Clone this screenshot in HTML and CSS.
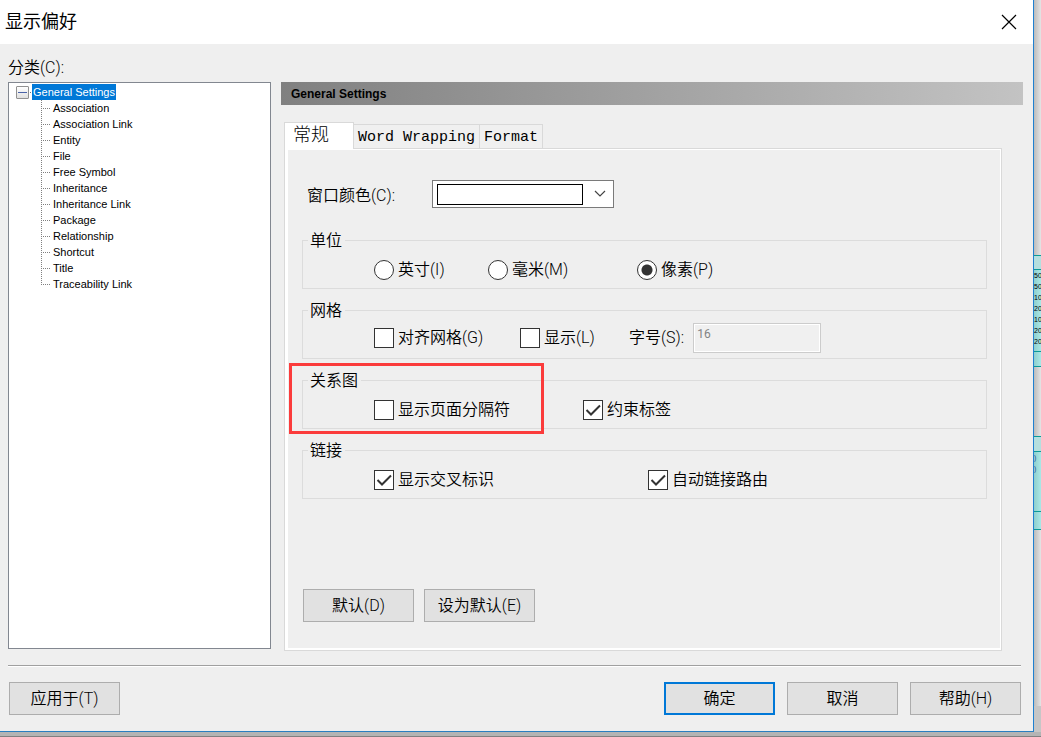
FILE: index.html
```html
<!DOCTYPE html>
<html lang="zh-CN">
<head>
<meta charset="utf-8">
<title>显示偏好</title>
<link rel="stylesheet" href="styles.css">
</head>
<body>
<div class="desktop">
  <main class="dialog">
    <header class="titlebar">
      <h1 class="title">显示偏好</h1>
      <button class="close" type="button" aria-label="关闭">
        <svg width="16" height="16" viewBox="0 0 16 16"><path d="M1 1L15 15M15 1L1 15" stroke="#000" stroke-width="1.2" fill="none"/></svg>
      </button>
    </header>
    <div class="content">
      <nav class="sidebar">
        <h2 class="caption">分类(C):</h2>
        <div class="tree">
          <div class="root">
            <button class="expander" type="button" aria-label="折叠"></button>
            <span class="dot"></span>
            <a class="node selected" href="#">General Settings</a>
          </div>
          <ul class="children">
            <li><a class="node" href="#">Association</a></li>
            <li><a class="node" href="#">Association Link</a></li>
            <li><a class="node" href="#">Entity</a></li>
            <li><a class="node" href="#">File</a></li>
            <li><a class="node" href="#">Free Symbol</a></li>
            <li><a class="node" href="#">Inheritance</a></li>
            <li><a class="node" href="#">Inheritance Link</a></li>
            <li><a class="node" href="#">Package</a></li>
            <li><a class="node" href="#">Relationship</a></li>
            <li><a class="node" href="#">Shortcut</a></li>
            <li><a class="node" href="#">Title</a></li>
            <li><a class="node" href="#">Traceability Link</a></li>
          </ul>
        </div>
      </nav>
      <section class="settings">
        <h2 class="banner">General Settings</h2>
        <div class="tabs">
          <button class="tab active" type="button">常规</button>
          <button class="tab" type="button">Word Wrapping</button>
          <button class="tab" type="button">Format</button>
        </div>
        <form class="panel">
          <div class="color-row">
            <label for="color">窗口颜色(C):</label>
            <div class="picker">
              <select id="color" class="color"><option></option></select>
              <span class="swatch"></span>
              <svg class="chevron" width="12" height="8" viewBox="0 0 12 8"><path d="M1 1L6 6L11 1" stroke="#444" stroke-width="1.2" fill="none"/></svg>
            </div>
          </div>
          <fieldset class="group">
            <legend>单位</legend>
            <div class="row units">
              <label class="option"><input class="radio" type="radio" name="unit">英寸(I)</label>
              <label class="option"><input class="radio" type="radio" name="unit">毫米(M)</label>
              <label class="option"><input class="radio" type="radio" name="unit" checked>像素(P)</label>
            </div>
          </fieldset>
          <fieldset class="group tall">
            <legend>网格</legend>
            <div class="row grid-row">
              <label class="option"><input class="check" type="checkbox">对齐网格(G)</label>
              <label class="option"><input class="check" type="checkbox">显示(L)</label>
              <label class="size">字号(S):<input class="number" type="text" value="16" disabled></label>
            </div>
          </fieldset>
          <fieldset class="group">
            <legend>关系图</legend>
            <div class="row diagram">
              <label class="option"><input class="check" type="checkbox">显示页面分隔符</label>
              <label class="option"><input class="check" type="checkbox" checked>约束标签</label>
            </div>
            <span class="highlight"></span>
          </fieldset>
          <fieldset class="group">
            <legend>链接</legend>
            <div class="row links">
              <label class="option"><input class="check" type="checkbox" checked>显示交叉标识</label>
              <label class="option"><input class="check" type="checkbox" checked>自动链接路由</label>
            </div>
          </fieldset>
          <div class="defaults">
            <button class="btn" type="button">默认(D)</button>
            <button class="btn" type="button">设为默认(E)</button>
          </div>
        </form>
      </section>
    </div>
    <footer class="footer">
      <button class="btn apply" type="button">应用于(T)</button>
      <button class="btn primary" type="button">确定</button>
      <button class="btn" type="button">取消</button>
      <button class="btn" type="button">帮助(H)</button>
    </footer>
  </main>
  <aside class="canvas">
    <div class="entity">
      <div class="entity-head"></div>
      <div class="entity-body">50<br>50<br>10<br>20<br>10<br>20<br>20</div>
      <div class="entity-foot"></div>
    </div>
    <div class="entity second">
      <div class="entity-head"></div>
      <div class="entity-body blue">)<br>)</div>
      <div class="entity-foot"></div>
    </div>
    <div class="scroll-corner"></div>
  </aside>
  <div class="status"></div>
</div>
</body>
</html>
```
FILE: styles.css
```css
* { box-sizing: border-box; }
body {
  margin: 0;
  color: #000;
  font: 350 16px/20px Roboto, "Noto Sans CJK SC", sans-serif;
}
button, input, select { font: inherit; color: inherit; }
h1, h2, ul, fieldset, legend { margin: 0; padding: 0; font-weight: inherit; }
a { color: inherit; text-decoration: none; }

.desktop {
  display: grid;
  grid-template-columns: minmax(0, 1fr) 7px;
  grid-template-rows: 1fr 5px;
  min-height: 100vh;
}
.dialog {
  display: flex;
  flex-direction: column;
  background: #efefef;
  border-right: 1px solid #2080d0;
  border-bottom: 1px solid #2a7ec0;
}

.titlebar {
  display: flex;
  align-items: center;
  justify-content: space-between;
  height: 44px;
  padding: 0 16px 0 5px;
  background: #fff;
}
.title { font-size: 18px; font-weight: 400; }
.close { display: flex; padding: 0; border: 0; background: none; }

.content { display: flex; flex: 1; gap: 10px; padding: 14px 10px 0 8px; }
.sidebar { display: flex; flex-direction: column; width: 263px; padding-bottom: 2px; }
.caption { height: 24px; font-size: 16px; }
.tree {
  flex: 1;
  padding: 1px 0 0 7px;
  background: #fff;
  border: 1px solid #828790;
  font: 11px/16px "Liberation Sans", sans-serif;
}
.root { display: flex; align-items: center; }
.expander {
  width: 13px;
  height: 13px;
  padding: 0;
  border: 1px solid #919191;
  border-radius: 1px;
  background: linear-gradient(#4b63a7, #4b63a7) center / 9px 1px no-repeat, linear-gradient(#fff, #e0e0e0);
}
.dot { width: 1px; height: 1px; margin: 0 1px; background: #777; }
.node { padding: 0 1px; }
.selected { color: #fff; background: #0078d7; }
.children { padding-left: 25px; list-style: none; }
.children li { display: flex; gap: 2px; }
.children li::before {
  content: "";
  width: 9px;
  height: 16px;
  background:
    repeating-linear-gradient(#808080 0 1px, transparent 1px 2px) left top / 1px 100% no-repeat,
    repeating-linear-gradient(90deg, #808080 0 1px, transparent 1px 2px) left 8px / 100% 1px no-repeat;
}
.children li:last-child::before { background-size: 1px 8px, 100% 1px; }

.settings { display: flex; flex: 1; flex-direction: column; min-width: 0; padding-top: 24px; }
.banner {
  height: 23px;
  padding-left: 10px;
  background: linear-gradient(90deg, #808080, #c3c3c3);
  font: bold 12px/24px "Liberation Sans", sans-serif;
}
.tabs { display: flex; align-items: flex-end; height: 43px; padding-left: 3px; }
.tab {
  height: 24px;
  padding: 2px 4px 0;
  border: 1px solid #d9d9d9;
  border-width: 1px 1px 0 0;
  background: #f0f0f0;
  font: 15px/22px "Liberation Mono", "Noto Sans CJK SC", monospace;
}
.active {
  z-index: 1;
  width: 70px;
  height: 27px;
  margin-bottom: -1px;
  padding: 0 8px;
  border-left-width: 1px;
  background: #fff;
  font-size: 18px;
  font-weight: 300;
  text-align: left;
}
.panel {
  display: flex;
  flex: 1;
  flex-direction: column;
  gap: 11px;
  margin: 0 21px 0 3px;
  padding: 31px 14px 28px 17px;
  border: 1px solid #d9d9d9;
  box-shadow: inset 3px 1px #fff, inset -1px -2px #fff;
}
.color-row { display: flex; align-items: center; height: 28px; margin-bottom: 11px; padding-left: 5px; }
.color-row label { width: 125px; padding-top: 3px; }
.picker { position: relative; width: 182px; height: 28px; }
.color {
  width: 100%;
  height: 100%;
  appearance: none;
  border: 1px solid #7a7a7a;
  border-radius: 0;
  background: #fff;
}
.swatch {
  position: absolute;
  inset: 4px 31px 3px 5px;
  border: 1px solid #000;
  pointer-events: none;
}
.chevron { position: absolute; top: 10px; right: 8px; pointer-events: none; }

.group { position: relative; min-width: 0; padding: 0 0 8px 5px; border: 1px solid #dcdcdc; }
.group legend { padding: 0 3px 0 2px; line-height: 21px; }
.row { display: flex; align-items: center; min-height: 20px; padding: 9px 0 0 66px; }
.tall { padding-bottom: 5px; }
.tall .row { padding-top: 2px; }
.option { display: flex; align-items: center; gap: 4px; }
.size { display: flex; align-items: center; gap: 9px; white-space: nowrap; }
.units .option { width: 114px; }
.units .option + .option { width: 149px; }
.grid-row .option { width: 146px; }
.grid-row .option + .option { width: 109px; }
.diagram .option { width: 209px; }
.links .option { width: 274px; }
.radio, .check {
  flex: none;
  width: 20px;
  height: 20px;
  margin: 0;
  appearance: none;
  border: 1px solid #333;
  background: #fff;
}
.radio { border-radius: 50%; }
.radio:checked { background: radial-gradient(circle, #333 0 5px, #fff 6px); }
.check:checked {
  background: #fff url("data:image/svg+xml,%3Csvg xmlns='http://www.w3.org/2000/svg' viewBox='0 0 18 18'%3E%3Cpath d='M2.5 9L7 13.500L16 4.500' fill='none' stroke='%23333' stroke-width='2'/%3E%3C/svg%3E") center / 18px no-repeat;
}
.number {
  width: 128px;
  height: 30px;
  padding: 0 4px 9px 3px;
  border: 1px solid #ccc;
  box-shadow: inset 0 0 0 1px #fff;
  background: #f0f0f0;
  color: #838383;
  font-size: 12px;
  font-weight: 400;
}
.highlight {
  position: absolute;
  top: -28px;
  left: -14px;
  width: 255px;
  height: 71px;
  border: 3px solid #fb3b3b;
  pointer-events: none;
}
.defaults { display: flex; gap: 10px; margin-top: auto; padding-left: 1px; }

.btn {
  width: 111px;
  height: 33px;
  padding: 0;
  border: 1px solid #adadad;
  background: #e1e1e1;
}
.primary { border: 2px solid #0078d7; }
.footer {
  display: flex;
  gap: 12px;
  margin: 14px 12px 0 8px;
  padding: 16px 0 16px 1px;
  border-top: 1px solid #a0a0a0;
  box-shadow: inset 0 1px #fff;
}
.apply { margin-right: auto; }

.canvas {
  display: flex;
  flex-direction: column;
  overflow: hidden;
  padding-top: 255px;
  background: linear-gradient(90deg, #bcbcbc, #e4e4e4);
  font: 7px/11px "Liberation Sans Narrow", "Liberation Sans", sans-serif;
}
.entity { border: solid #0c9a98; border-width: 1px 0; background: linear-gradient(90deg, #8fcfcd, #a9e8e6); }
.second { margin-top: 69px; }
.entity-head { height: 13px; background: #b5dfde; }
.entity-body { height: 83px; border: solid #0c9a98; border-width: 1px 0; }
.second .entity-head { height: 14px; }
.second .entity-body { height: 61px; }
.entity-foot { height: 14px; }
.second .entity-foot { height: 17px; }
.blue { color: #234e9c; }
.scroll-corner { height: 26px; margin-top: auto; background: #c6c6c6; }
.status { grid-column: 1 / -1; background: linear-gradient(#b4b4b4 0 4px, #808080 4px); }
```
